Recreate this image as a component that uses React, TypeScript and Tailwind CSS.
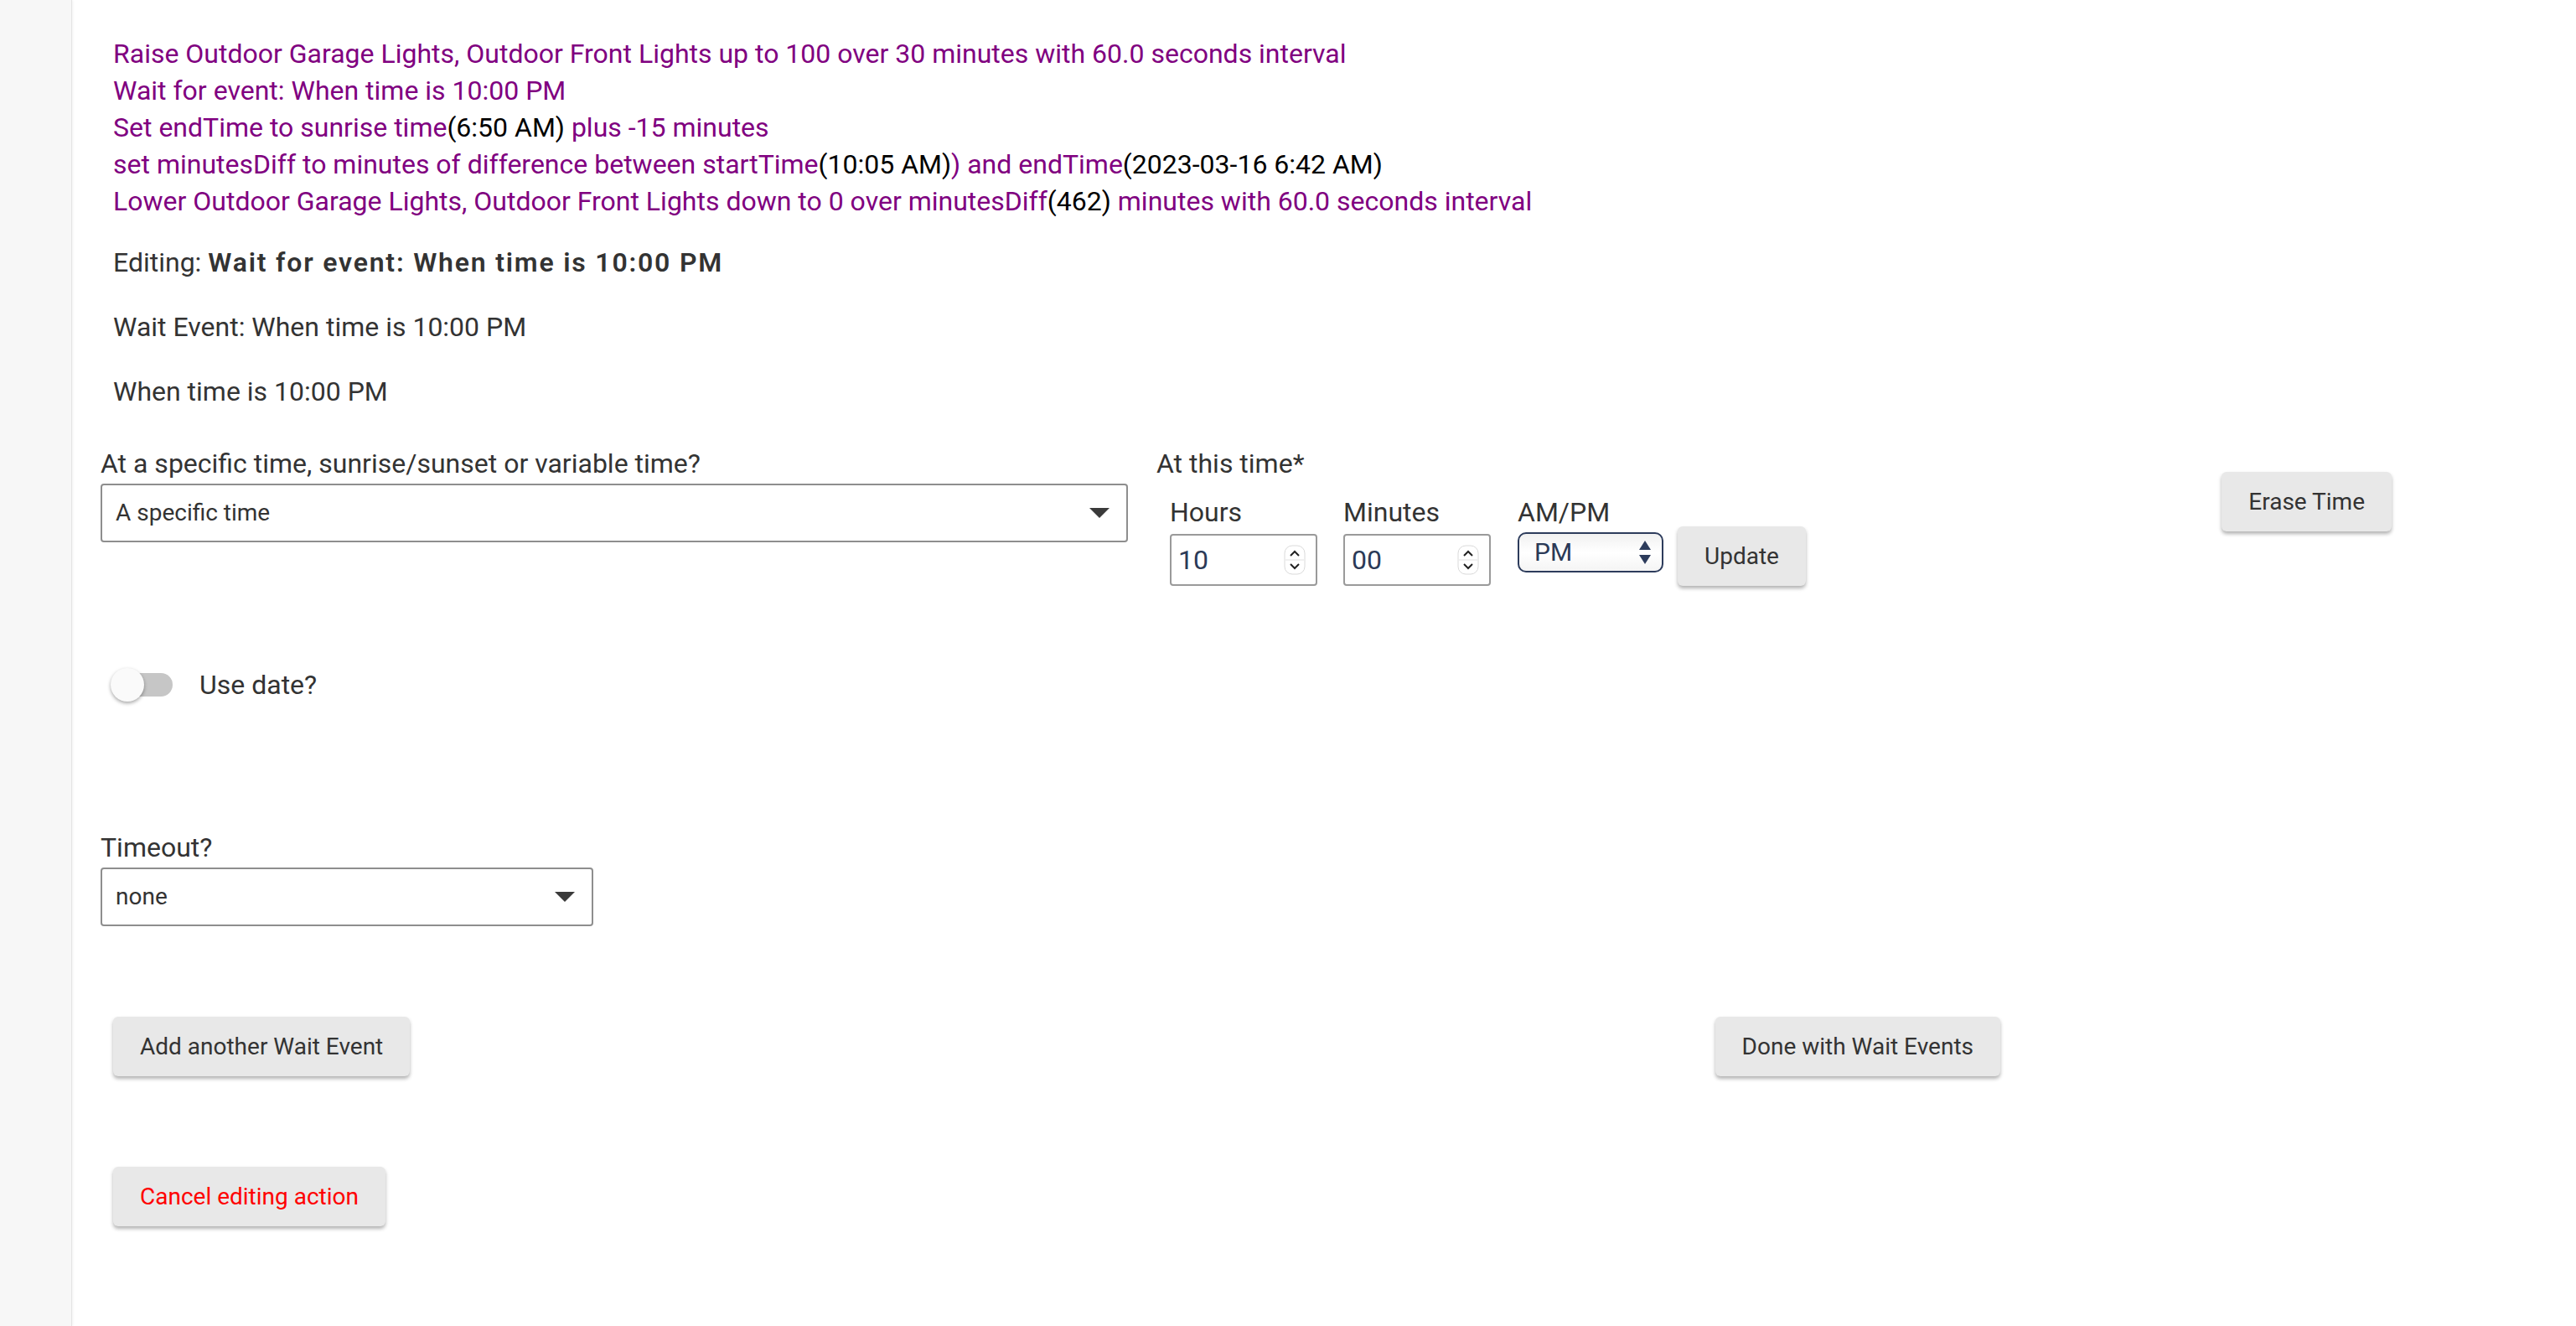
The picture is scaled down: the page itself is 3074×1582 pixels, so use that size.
import React from "react";

const Val = ({ children }: { children: React.ReactNode }) => (
  <span className="text-black">{children}</span>
);

interface RaisedButtonProps {
  label: string;
  danger?: boolean;
  className?: string;
}

const RaisedButton = ({ label, danger = false, className = "" }: RaisedButtonProps) => (
  <button
    className={`h-[71px] px-[32px] rounded-[6px] bg-[#e8e8e8] text-[28px] leading-none whitespace-nowrap shadow-[0_3px_4px_rgba(0,0,0,0.3)] ${
      danger ? "text-[#ff0000]" : "text-[#333]"
    } ${className}`}
  >
    {label}
  </button>
);

const OutlinedSelect = ({ value, width }: { value: string; width: string }) => (
  <div
    className={`flex items-center justify-between h-[70px] border-2 border-[#8e8e8e] rounded-[4px] pl-[16px] pr-[20px] text-[28px] text-[#333] ${width}`}
  >
    <span>{value}</span>
    <svg width="24" height="12" viewBox="0 0 24 12">
      <path d="M0 0h24L12 12z" fill="#3a3a3a" />
    </svg>
  </div>
);

const Spinner = () => (
  <svg width="26" height="36" viewBox="0 0 26 36">
    <rect x="1" y="1" width="24" height="34" rx="9" fill="#fff" stroke="#dadada" />
    <line x1="2" y1="18" x2="24" y2="18" stroke="#e2e2e2" />
    <path d="M8 13l5-5 5 5" fill="none" stroke="#222" strokeWidth="2" />
    <path d="M8 23l5 5 5-5" fill="none" stroke="#222" strokeWidth="2" />
  </svg>
);

const NumberBox = ({ value }: { value: string }) => (
  <div className="flex items-center justify-between w-[176px] h-[62px] border-2 border-[#9a9a9a] rounded-[4px] pl-[8px] pr-[12px]">
    <span className="text-[32px] text-[#2b3a57]">{value}</span>
    <Spinner />
  </div>
);

const AmPmSelect = () => (
  <div className="flex items-center justify-between w-[174px] h-[48px] mb-[16px] border-2 border-[#2d3c5c] rounded-[10px] bg-gradient-to-b from-[#f1f1f1] via-white to-[#f4f4f4] pl-[18px] pr-[12px]">
    <span className="text-[30px] leading-none text-[#2b3a57]">PM</span>
    <svg width="16" height="30" viewBox="0 0 16 30">
      <path d="M8 1l7 11H1z" fill="#2d3c5c" />
      <path d="M1 18h14L8 29z" fill="#2d3c5c" />
    </svg>
  </div>
);

const Toggle = () => (
  <div className="relative flex items-center w-[80px] h-[40px]">
    <div className="ml-[4px] w-[70px] h-[28px] rounded-full bg-[#c6c6c6]" />
    <div className="absolute left-0 top-0 w-[40px] h-[40px] rounded-full bg-[#fafafa] shadow-[0_2px_4px_rgba(0,0,0,0.35)]" />
  </div>
);

export default function App() {
  return (
    <div className="flex w-full min-h-[1582px] bg-white [font-family:Roboto,'Liberation_Sans',sans-serif]">
      <div className="w-[86px] shrink-0 bg-[#f7f7f7] border-r border-[#e4e4e4] shadow-[1px_0_3px_rgba(0,0,0,0.06)]" />

      <div className="flex-1 pl-[34px] pt-[42px]">
        <div className="pl-[15px] text-[32px] leading-[44px] text-[#800080]">
          <p>Raise Outdoor Garage Lights, Outdoor Front Lights up to 100 over 30 minutes with 60.0 seconds interval</p>
          <p>Wait for event: When time is 10:00 PM</p>
          <p>
            Set endTime to sunrise time<Val>(6:50 AM)</Val> plus -15 minutes
          </p>
          <p>
            set minutesDiff to minutes of difference between startTime<Val>(10:05 AM)</Val>) and endTime
            <Val>(2023-03-16 6:42 AM)</Val>
          </p>
          <p>
            Lower Outdoor Garage Lights, Outdoor Front Lights down to 0 over minutesDiff<Val>(462)</Val> minutes
            with 60.0 seconds interval
          </p>
        </div>

        <div className="mt-[28px] pl-[15px] flex flex-col gap-[31px] text-[32px] leading-[46px] text-[#333]">
          <p>
            Editing: <span className="font-semibold tracking-[1.8px]">Wait for event: When time is 10:00 PM</span>
          </p>
          <p>Wait Event: When time is 10:00 PM</p>
          <p>When time is 10:00 PM</p>
        </div>

        <div className="mt-[43px] flex items-start w-[2734px]">
          <div className="flex flex-col gap-[4px]">
            <label className="text-[32px] leading-[40px] text-[#333]">
              At a specific time, sunrise/sunset or variable time?
            </label>
            <OutlinedSelect value="A specific time" width="w-[1226px]" />
          </div>

          <div className="ml-[34px] flex flex-col">
            <span className="text-[32px] leading-[40px] text-[#333]">At this time*</span>
            <div className="ml-[16px] mt-[18px] flex items-end">
              <div className="flex flex-col gap-[6px]">
                <span className="text-[32px] leading-[40px] text-[#333]">Hours</span>
                <NumberBox value="10" />
              </div>
              <div className="ml-[31px] flex flex-col gap-[6px]">
                <span className="text-[32px] leading-[40px] text-[#333]">Minutes</span>
                <NumberBox value="00" />
              </div>
              <div className="ml-[32px] flex flex-col gap-[4px]">
                <span className="text-[32px] leading-[40px] text-[#333]">AM/PM</span>
                <AmPmSelect />
              </div>
              <RaisedButton label="Update" className="ml-[17px]" />
            </div>
          </div>

          <RaisedButton label="Erase Time" className="ml-auto mt-[30px]" />
        </div>

        <div className="mt-[94px] ml-[12px] flex items-center h-[48px]">
          <Toggle />
          <span className="ml-[26px] text-[32px] text-[#333]">Use date?</span>
        </div>

        <div className="mt-[150px] flex flex-col gap-[4px]">
          <label className="text-[32px] leading-[40px] text-[#333]">Timeout?</label>
          <OutlinedSelect value="none" width="w-[588px]" />
        </div>

        <div className="mt-[108px] ml-[15px] flex items-center justify-between w-[2252px]">
          <RaisedButton label="Add another Wait Event" />
          <RaisedButton label="Done with Wait Events" />
        </div>

        <div className="mt-[108px] ml-[15px]">
          <RaisedButton label="Cancel editing action" danger />
        </div>
      </div>
    </div>
  );
}
